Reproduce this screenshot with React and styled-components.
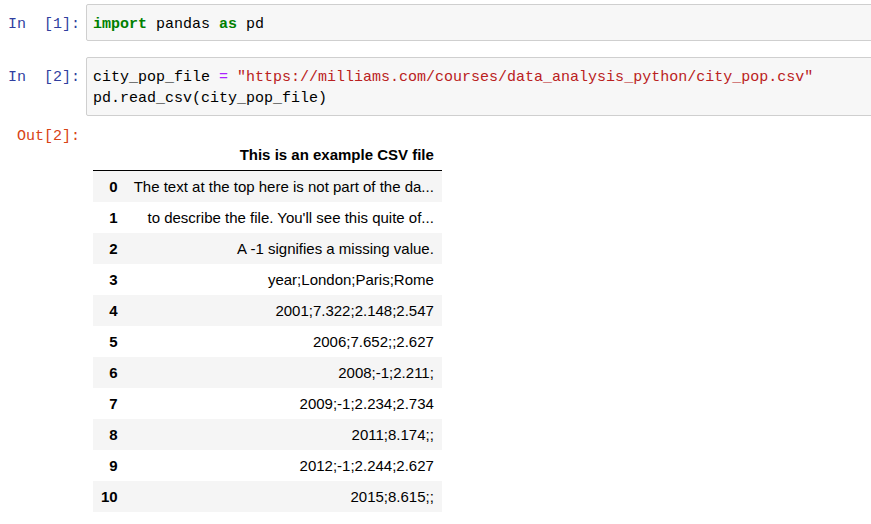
import React from 'react';
import styled, { createGlobalStyle } from 'styled-components';

const GlobalStyle = createGlobalStyle`
  html, body {
    margin: 0;
    padding: 0;
    background: #ffffff;
    overflow-x: hidden;
  }
`;

const rows = [
  'The text at the top here is not part of the da...',
  "to describe the file. You'll see this quite of...",
  'A -1 signifies a missing value.',
  'year;London;Paris;Rome',
  '2001;7.322;2.148;2.547',
  '2006;7.652;;2.627',
  '2008;-1;2.211;',
  '2009;-1;2.234;2.734',
  '2011;8.174;;',
  '2012;-1;2.244;2.627',
  '2015;8.615;;',
];

const Notebook = () => {
  return (
    <Page>
      <GlobalStyle />
      <Cell>
        <Prompt>In&nbsp;&nbsp;[1]:</Prompt>
        <InputArea>
          <Line>
            <Kw>import</Kw> pandas <Kw>as</Kw> pd
          </Line>
        </InputArea>
      </Cell>

      <Cell $gap={16}>
        <Prompt>In&nbsp;&nbsp;[2]:</Prompt>
        <InputArea $tall>
          <Line>
            city_pop_file <Op>=</Op>{' '}
            <Str>"https://milliams.com/courses/data_analysis_python/city_pop.csv"</Str>
          </Line>
          <Line>pd.read_csv(city_pop_file)</Line>
        </InputArea>
      </Cell>

      <Output>
        <Prompt $out>Out[2]:</Prompt>
        <Frame>
          <thead>
            <tr>
              <HeadCell />
              <HeadCell>This is an example CSV file</HeadCell>
            </tr>
          </thead>
          <tbody>
            {rows.map((value, i) => (
              <Row key={i} $striped={i % 2 === 0}>
                <IndexCell>{i}</IndexCell>
                <DataCell>{value}</DataCell>
              </Row>
            ))}
          </tbody>
        </Frame>
      </Output>
    </Page>
  );
};

const Page = styled.div`
  padding-top: 4px;
  font-family: "Liberation Mono", "DejaVu Sans Mono", monospace;
  font-size: 15px;
  color: #000;
`;

const Cell = styled.div`
  display: flex;
  align-items: flex-start;
  margin-top: ${(p) => (p.$gap ? `${p.$gap}px` : '0')};
  margin-right: -20px;
`;

const Prompt = styled.div`
  flex: 0 0 86px;
  box-sizing: border-box;
  padding: ${(p) => (p.$out ? '0' : '10px')} 6px 0 0;
  text-align: right;
  line-height: 21px;
  color: ${(p) => (p.$out ? '#d84315' : '#303f9f')};
  white-space: nowrap;
`;

const InputArea = styled.div`
  flex: 1;
  background: #f7f7f7;
  border: 1px solid #cfcfcf;
  border-radius: 2px;
  padding: 9px 6px ${(p) => (p.$tall ? '6px' : '5px')};
`;

const Line = styled.div`
  line-height: 21px;
  white-space: pre;
`;

const Kw = styled.span`
  color: #008000;
  font-weight: bold;
`;

const Op = styled.span`
  color: #aa22ff;
`;

const Str = styled.span`
  color: #ba2121;
`;

const Output = styled.div`
  display: flex;
  align-items: flex-start;
  margin-top: 10px;
`;

const Frame = styled.table`
  margin: 13px 0 0 7px;
  border-collapse: collapse;
  border-spacing: 0;
  font-family: "Liberation Sans", Arial, sans-serif;
  font-size: 15px;
  color: #000;
`;

const HeadCell = styled.th`
  height: 17px;
  padding: 7px 8px;
  text-align: right;
  font-weight: bold;
  line-height: 17px;
  border-bottom: 1px solid #000;
  white-space: nowrap;
`;

const Row = styled.tr`
  background: ${(p) => (p.$striped ? '#f5f5f5' : '#ffffff')};
`;

const IndexCell = styled.th`
  padding: 7px 8px;
  line-height: 17px;
  text-align: right;
  font-weight: bold;
`;

const DataCell = styled.td`
  padding: 7px 8px;
  line-height: 17px;
  text-align: right;
  white-space: nowrap;
`;

export default Notebook;
